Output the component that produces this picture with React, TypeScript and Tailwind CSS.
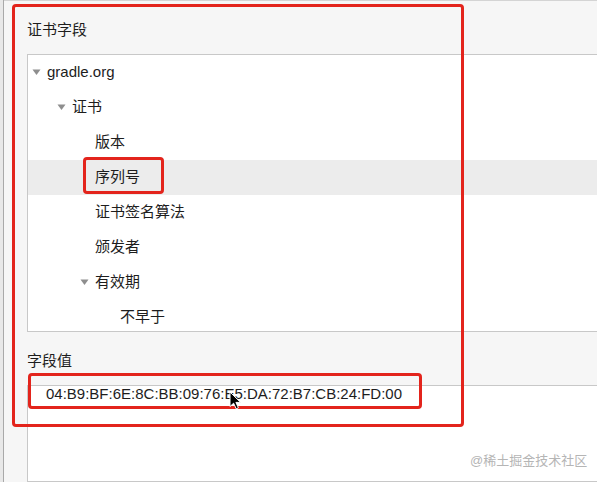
import React from "react";

type Row = { label: string; pad: string; open?: boolean; selected?: boolean };

// 证书字段 树
const rows: Row[] = [
  { label: "gradle.org", pad: "pl-[4px]", open: true },
  { label: "证书", pad: "pl-[29px]", open: true },
  { label: "版本", pad: "pl-[52px]" },
  { label: "序列号", pad: "pl-[52px]", selected: true },
  { label: "证书签名算法", pad: "pl-[52px]" },
  { label: "颁发者", pad: "pl-[52px]" },
  { label: "有效期", pad: "pl-[52px]", open: true },
  { label: "不早于", pad: "pl-[77px]" },
];

const Caret = () => (
  <svg width="9" height="7" viewBox="0 0 9 7" className="block">
    <path d="M0.5 0.5 L8.5 0.5 L4.5 6 Z" fill="#8e8e8e" />
  </svg>
);

const Cursor = () => (
  <svg width="13" height="19" viewBox="0 0 13 19">
    <path
      d="M1 1 L1 15.5 L4.6 12.2 L7.2 17.8 L9.4 16.8 L6.9 11.4 L11.6 11.4 Z"
      fill="#000"
      stroke="#fff"
      strokeWidth="1"
      strokeLinejoin="round"
    />
  </svg>
);

const App = () => {
  return (
    <div
      className="relative h-[482px] w-[597px] overflow-hidden bg-[#f6f6f6] text-[15px] text-[#1d1d1d]"
      style={{ fontFamily: '"Liberation Sans", "Noto Sans CJK SC", sans-serif' }}
    >
      <div className="flex h-full">
        {/* 左侧边线 */}
        <div className="w-[4px] border-r border-[#a9a9a9] bg-[#e8e8e8]" />

        <div className="flex min-w-0 flex-1 flex-col border-t border-[#d4d4d4] pl-[23px]">
          <div className="mt-[19px] h-[20px] leading-[20px]">证书字段</div>

          {/* 字段树 */}
          <div className="mt-[14px] h-[278px] overflow-hidden border-y border-l border-[#c8c8c8] bg-white">
            {rows.map((r) => (
              <div
                key={r.label}
                className={`flex h-[35px] items-center ${r.pad} ${
                  r.selected ? "bg-[#ececec]" : ""
                }`}
              >
                <div className="flex w-[15px] items-center">
                  {r.open && <Caret />}
                </div>
                <span className="whitespace-nowrap">{r.label}</span>
              </div>
            ))}
          </div>

          <div className="mt-[19px] h-[20px] leading-[20px]">字段值</div>

          {/* 字段值 */}
          <div className="mt-[14px] flex-1 border-y border-l border-[#c8c8c8] bg-white pl-[18px]">
            <div className="whitespace-nowrap leading-[15px]">
              04:B9:BF:6E:8C:BB:09:76:E5:DA:72:B7:CB:24:FD:00
            </div>
          </div>
        </div>
      </div>

      {/* 红色标注框 */}
      <div className="pointer-events-none absolute left-[12px] top-[4px] h-[423px] w-[452px] rounded-[4px] border-[3px] border-[#e3241c]" />
      <div className="pointer-events-none absolute left-[83px] top-[157px] h-[37px] w-[81px] rounded-[4px] border-[3px] border-[#e3241c]" />
      <div className="pointer-events-none absolute left-[28px] top-[373px] h-[36px] w-[394px] rounded-[4px] border-[3px] border-[#e3241c]" />

      <div className="pointer-events-none absolute left-[229px] top-[391px]">
        <Cursor />
      </div>

      <div className="pointer-events-none absolute left-[470px] top-[452px] text-[13px] leading-[18px] text-[#b5b5b5]">
        @稀土掘金技术社区
      </div>
    </div>
  );
};

export default App;
